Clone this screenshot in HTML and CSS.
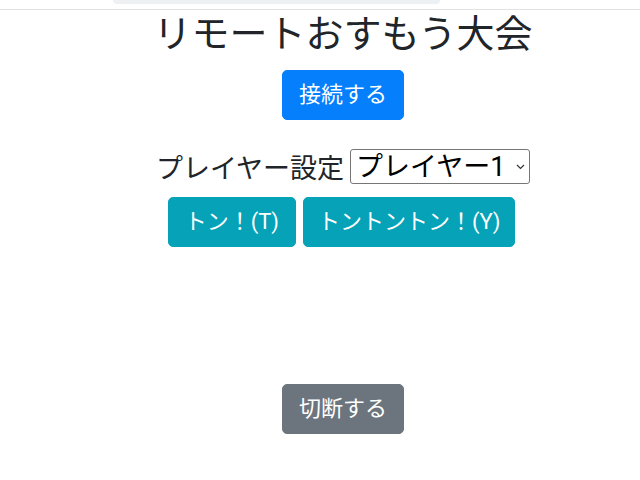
FILE: index.html
```html
<!doctype html>
<html lang="ja">
<head>
    <meta charset="UTF-8">
    <title>リモートおすもう大会</title>
    <link rel="stylesheet" href="styles.css">
</head>
<body>
    <div class="topbar">
        <div class="tab"></div>
    </div>
    <div class="container">
        <h1 class="title">リモートおすもう大会</h1>
        <button class="btn btn-primary" id="connect">接続する</button>
        <div class="player">
            <label for="player">プレイヤー設定</label>
            <span class="select-wrap">
                <select id="player" class="player-select">
                    <option>プレイヤー1</option>
                    <option>プレイヤー2</option>
                </select>
                <svg class="chevron" width="9" height="6" viewBox="0 0 9 6"><path d="M1 1l3.5 3.5L8 1" fill="none" stroke="#333" stroke-width="1.2"/></svg>
            </span>
        </div>
        <div class="actions">
            <button class="btn btn-info">トン！(T)</button>
            <button class="btn btn-info">トントントン！(Y)</button>
        </div>
        <div class="stage"></div>
        <button class="btn btn-secondary" id="disconnect">切断する</button>
    </div>
</body>
</html>
```

FILE: styles.css
```css
* {
    margin: 0;
    padding: 0;
    box-sizing: border-box;
}
body {
    font-family: Roboto, "Noto Sans CJK JP", sans-serif;
    color: #212529;
    background: #fff;
}
.topbar {
    height: 10px;
    border-bottom: 1px solid #e2e2e2;
}
.topbar .tab {
    width: 327px;
    height: 4px;
    margin-left: 113px;
    background: #eef1f3;
    border-radius: 0 0 12px 12px;
}
.container {
    display: flex;
    flex-direction: column;
    align-items: center;
    padding-left: 46px;
}
.title {
    font-size: 38px;
    font-weight: 400;
    line-height: 46px;
    margin-top: 1px;
}
.btn {
    font-family: inherit;
    font-size: 22px;
    line-height: 30px;
    padding: 9px 16px;
    border: 1px solid transparent;
    border-radius: 5px;
    color: #fff;
    cursor: pointer;
}
.btn-primary {
    background: #057ffc;
    border-color: #057ffc;
}
.btn-info {
    background: #05a2b8;
    border-color: #05a2b8;
}
.btn-secondary {
    background: #6c757d;
    border-color: #6c757d;
}
#connect {
    margin-top: 13px;
}
.player {
    display: flex;
    align-items: center;
    gap: 6px;
    margin-top: 27px;
    font-size: 27px;
}
.select-wrap {
    position: relative;
    display: flex;
}
.player-select {
    appearance: none;
    font-family: inherit;
    font-size: 27px;
    color: #000;
    height: 35px;
    width: 180px;
    padding: 0 20px 0 5px;
    border: 1px solid #767676;
    border-radius: 3px;
    background: #fff;
}
.chevron {
    position: absolute;
    right: 5px;
    top: 15px;
    pointer-events: none;
}
.actions {
    display: flex;
    gap: 7px;
    margin-top: 11px;
    margin-right: 3px;
}
.btn-info:last-child {
    padding: 9px 14px;
}
.stage {
    height: 137px;
}
```
